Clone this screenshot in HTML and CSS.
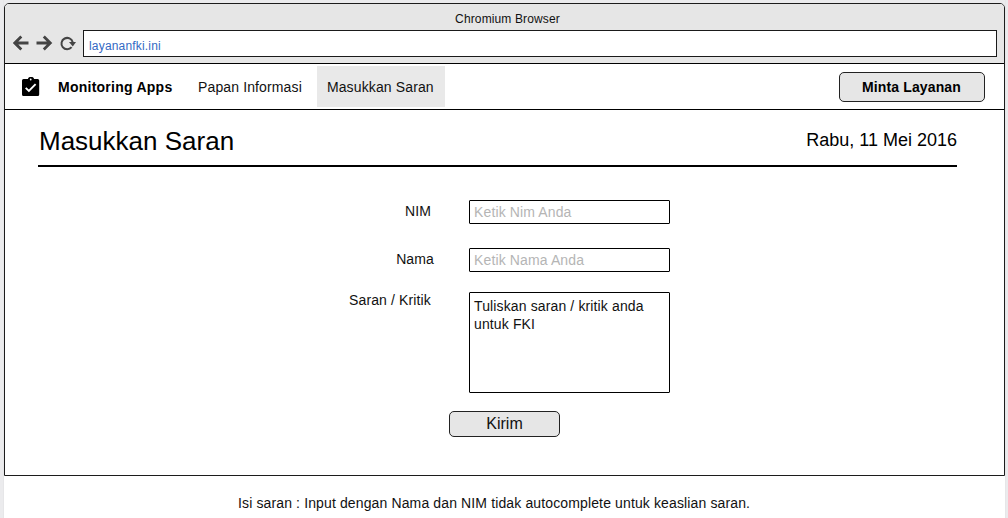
FILE: index.html
```html
<!DOCTYPE html>
<html lang="id">
<head>
<meta charset="utf-8">
<title>Masukkan Saran</title>
<link rel="stylesheet" href="styles.css">
</head>
<body>
<div class="page">
  <div class="window">
    <header class="chrome">
      <div class="chrome-title">Chromium Browser</div>
      <div class="toolbar">
        <svg class="controls" width="66" height="18" viewBox="0 0 66 18" fill="none" stroke="#444" stroke-width="2.8">
          <path d="M15.500 9H2M8.300 2.500L1.800 9L8.300 15.500"/>
          <path d="M23.500 9H37M30.800 2.500L37.300 9L30.800 15.500"/>
          <path d="M58.600 13.200A5.700 5.700 0 1 1 59.700 8.200" stroke-width="2"/>
          <path d="M56 8H63L59.800 12.500Z" fill="#444" stroke="none"/>
        </svg>
        <div class="address">layananfki.ini</div>
      </div>
    </header>
    <nav class="nav">
      <svg class="logo" width="18" height="20" viewBox="0 0 18 20">
        <path fill="#000" d="M1.800 2H5.800A3.400 3.400 0 0 1 12.200 2H15.700A1.500 1.500 0 0 1 17.200 3.500V17.500A1.500 1.500 0 0 1 15.700 19H1.500A1.500 1.500 0 0 1 0 17.500V3.500A1.500 1.500 0 0 1 1.500 2Z"/>
        <circle cx="8.700" cy="2.500" r=".9" fill="#fff"/>
        <path d="M3.700 10.800L6.900 14L13.600 7.200" fill="none" stroke="#fff" stroke-width="1.900"/>
      </svg>
      <span class="brand">Monitoring Apps</span>
      <a class="link">Papan Informasi</a>
      <a class="link active">Masukkan Saran</a>
      <button class="btn request">Minta Layanan</button>
    </nav>
    <main class="content">
      <div class="heading">
        <h1 class="title">Masukkan Saran</h1>
        <span class="date">Rabu, 11 Mei 2016</span>
      </div>
      <form class="form">
        <label class="label nim">NIM</label>
        <div class="field hint">Ketik Nim Anda</div>
        <label class="label">Nama</label>
        <div class="field hint">Ketik Nama Anda</div>
        <label class="label saran">Saran / Kritik</label>
        <div class="field area">Tuliskan saran / kritik anda untuk FKI</div>
      </form>
      <button class="btn send">Kirim</button>
    </main>
  </div>
  <p class="note">Isi saran : Input dengan Nama dan NIM tidak autocomplete untuk keaslian saran.</p>
</div>
</body>
</html>
```
FILE: styles.css
```css
* { box-sizing: border-box; }
body {
  margin: 0;
  height: 518px;
  overflow: hidden;
  background: #ebebed;
  font: 14px/18px "Liberation Sans", Arial, sans-serif;
  letter-spacing: 0.13px;
  color: #111;
}
.page {
  height: 518px;
  margin: 0 3px 0 4px;
  padding-top: 3px;
  background: linear-gradient(#ebebed 12px, #fff 12px);
  box-shadow: 0 0 1px #ccc;
}
.window {
  width: 1001px;
  height: 473px;
  border: 1px solid #1c1c1c;
  border-radius: 5px 5px 0 0;
  background: #fff;
  overflow: hidden;
}
.chrome {
  height: 60px;
  border-bottom: 1px solid #000;
  background: #e6e6e6;
}
.chrome-title {
  height: 26px;
  padding: 6px 0 0 6px;
  font-size: 12px;
  text-align: center;
}
.toolbar {
  display: flex;
  align-items: flex-start;
  padding: 0 7px 0 8px;
}
.controls { flex: none; margin: 4px 4px 0 0; }
.address {
  flex: 1;
  height: 27px;
  padding: 7px 5px 0;
  border: 1px solid #1a1a1a;
  background: #fff;
  font-size: 12px;
  line-height: 17px;
  letter-spacing: 0.18px;
  color: #3369c4;
}
.nav {
  display: flex;
  align-items: center;
  height: 46px;
  padding: 0 19px 0 17px;
  border-bottom: 1px solid #000;
}
.logo { margin-right: 18px; }
.brand {
  width: 130px;
  font-weight: bold;
  letter-spacing: 0.25px;
  color: #000;
}
.link { padding: 12px 10px 11px; }
.active {
  margin-left: 5px;
  width: 128px;
  background: #e9e9e9;
}
.btn {
  padding: 0;
  border: 1px solid #222;
  border-radius: 5px;
  background: #e6e6e6;
  font: inherit;
  letter-spacing: inherit;
  color: #111;
}
.request {
  width: 146px;
  height: 30px;
  margin-left: auto;
  padding-right: 1px;
  font-weight: bold;
  color: #000;
}
.content { padding: 0 47px 0 33px; }
.heading {
  display: flex;
  justify-content: space-between;
  height: 57px;
  border-bottom: 2px solid #000;
  letter-spacing: 0;
  color: #000;
}
.title {
  margin: 0;
  padding: 16px 0 0 1px;
  font-size: 26px;
  line-height: 30px;
  font-weight: normal;
}
.date { padding-top: 20px; font-size: 18px; line-height: 20px; }
.form {
  display: grid;
  grid-template-columns: 396px 201px;
  grid-template-rows: 48px 44px 101px;
  column-gap: 35px;
  padding-top: 33px;
}
.label { text-align: right; padding-top: 2px; }
.nim { padding-right: 3px; }
.saran { padding: 0 3px 0 0; margin-top: -1px; }
.field {
  height: 24px;
  padding: 2px 4px 0;
  border: 1px solid #000;
  border-radius: 1px;
}
.hint { color: #b5b5b5; }
.area { height: 101px; padding-top: 4px; }
.send {
  display: block;
  width: 111px;
  height: 26px;
  margin: 18px 0 0 411px;
  font-size: 16px;
  letter-spacing: 0;
}
.note { margin: 18px 0 0 234px; }
```
